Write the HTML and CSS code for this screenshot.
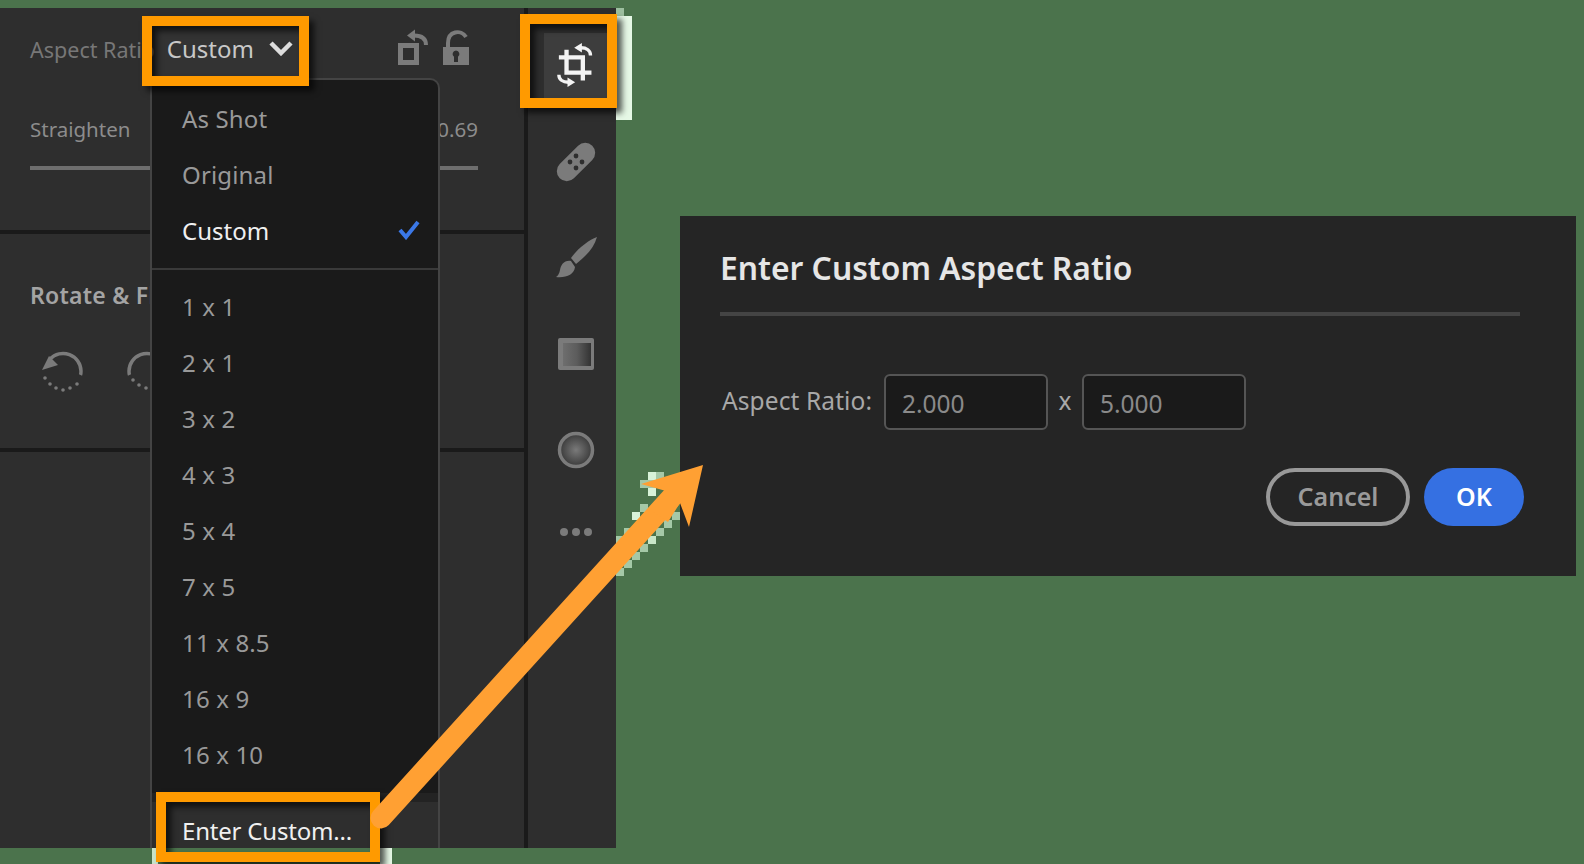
FILE: index.html
```html
<!DOCTYPE html>
<html lang="en">
<head>
<meta charset="utf-8">
<title>Enter Custom Aspect Ratio</title>
<link rel="stylesheet" href="styles.css">
</head>
<body>
<svg class="halos" viewBox="0 0 1584 864" aria-hidden="true">
  <rect x="616" y="8" width="8" height="8" fill="#9dbf9f"/>
  <rect x="616" y="16" width="16" height="104" fill="#e6f8e6"/>
  <rect x="152" y="848" width="6" height="16" fill="#c9e4c9"/>
  <rect x="380" y="848" width="12" height="16" fill="#e6f8e6"/>
  <g fill="#a5c8a7">
    <rect x="648" y="472" width="8" height="8" fill="#d8f2d8"/><rect x="656" y="472" width="8" height="8"/>
    <rect x="640" y="480" width="16" height="8"/><rect x="648" y="488" width="8" height="8" fill="#d8f2d8"/>
    <rect x="640" y="504" width="8" height="8"/><rect x="632" y="512" width="8" height="8" fill="#d8f2d8"/>
    <rect x="624" y="528" width="8" height="8"/><rect x="616" y="536" width="8" height="8"/>
    <rect x="672" y="512" width="8" height="8"/><rect x="664" y="520" width="8" height="8"/>
    <rect x="656" y="528" width="8" height="8"/><rect x="648" y="536" width="8" height="8" fill="#c8e6c8"/>
    <rect x="640" y="544" width="8" height="8"/><rect x="632" y="552" width="8" height="8"/>
    <rect x="624" y="560" width="8" height="8"/><rect x="616" y="568" width="8" height="8"/>
  </g>
</svg>

<section class="panel">
  <div class="panel-main">
    <div class="group group-crop">
      <div class="aspect-row">
        <span class="aspect-label">Aspect Ratio</span>
        <span class="aspect-value">Custom
          <svg class="chevron" viewBox="0 0 26 16"><path d="M3 3l10 10L23 3"/></svg>
        </span>
        <span class="aspect-tools">
          <svg class="tool-svg" viewBox="0 0 30 38"><rect x="2.500" y="16.500" width="16" height="17" fill="none" stroke="#7b7b7b" stroke-width="5"/><path d="M28 16c0-6-4-9.500-12-9.500" fill="none" stroke="#7b7b7b" stroke-width="4"/><path d="M17 .5v12L9 6.500z" fill="#7b7b7b"/></svg>
          <svg class="tool-svg" viewBox="0 0 30 38"><path d="M7 19v-5c0-12 13-14 18-6" fill="none" stroke="#7b7b7b" stroke-width="4"/><path fill-rule="evenodd" d="M2 18h26v18H2zM15 21.500a3.500 3.500 0 0 0-2 6.300V33h4v-5.200a3.500 3.500 0 0 0-2-6.300z" fill="#7b7b7b"/></svg>
        </span>
      </div>
      <div class="straighten-row">
        <span>Straighten</span>
        <span>0.69</span>
      </div>
      <div class="slider"></div>
    </div>
    <div class="group group-rotate">
      <h3 class="rotate-title">Rotate &amp; Flip</h3>
      <div class="rotate-icons">
        <svg class="rotate-icon" viewBox="0 0 44 44"><path d="M9 10a18 18 0 0 1 31 12c0 2 0 3-.5 4" fill="none" stroke="#7b7b7b" stroke-width="3.500"/><path d="M0 15l16-5-9-9z" fill="#7b7b7b" transform="translate(1 6)"/><g fill="#7b7b7b"><circle cx="4" cy="29" r="1.800"/><circle cx="9" cy="35" r="1.800"/><circle cx="15" cy="39" r="1.800"/><circle cx="22" cy="41" r="1.800"/><circle cx="29" cy="39" r="1.800"/><circle cx="36" cy="35" r="1.800"/></g></svg>
        <svg class="rotate-icon" viewBox="0 0 44 44"><path d="M35 10A18 18 0 0 0 4 22c0 2 0 3 .5 4" fill="none" stroke="#7b7b7b" stroke-width="3.500"/><g fill="#7b7b7b"><circle cx="8" cy="31" r="1.800"/><circle cx="14" cy="36" r="1.800"/><circle cx="21" cy="39" r="1.800"/><circle cx="28" cy="39" r="1.800"/></g></svg>
      </div>
    </div>
  </div>
  <div class="panel-divider"></div>
  <nav class="toolbar">
    <div class="tool tool-active">
      <svg class="tool-icon" viewBox="0 0 48 48"><path d="M3 15h25v24M11 7v24h26" fill="none" stroke="#f4f4f4" stroke-width="4.500"/><path d="M36 13c0-5-4-8-10-8" fill="none" stroke="#f4f4f4" stroke-width="3.500"/><path d="M27 0v10l-8-5z" fill="#f4f4f4"/><path d="M3 33c0 5 4 8 10 8" fill="none" stroke="#f4f4f4" stroke-width="3.500"/><path d="M12 36v10l8-5z" fill="#f4f4f4"/></svg>
    </div>
    <div class="tool">
      <svg class="tool-icon" viewBox="0 0 48 48"><rect x="1" y="14" width="46" height="20" rx="10" fill="#7b7b7b" transform="rotate(-45 24 24)"/><g fill="#2e2e2e"><circle cx="24" cy="18" r="2.400"/><circle cx="18" cy="24" r="2.400"/><circle cx="30" cy="24" r="2.400"/><circle cx="24" cy="30" r="2.400"/></g></svg>
    </div>
    <div class="tool">
      <svg class="tool-icon" viewBox="0 0 48 48"><path d="M45 3C37 6 26 14 19 24l5 6C34 22 42 14 45 3z" fill="#7b7b7b"/><path d="M19 27c-7-1-10 4-11 9-.5 3-2 6-4 7 10 1 18-2 19-10z" fill="#7b7b7b"/></svg>
    </div>
    <div class="tool">
      <svg class="tool-icon" viewBox="0 0 48 48"><defs><linearGradient id="gr"><stop offset="0" stop-color="#6e6e6e"/><stop offset=".5" stop-color="#5c5c5c"/><stop offset="1" stop-color="#333"/></linearGradient></defs><rect x="6" y="8" width="36" height="32" rx="2" fill="#7b7b7b"/><rect x="11" y="13" width="28" height="23" fill="url(#gr)"/></svg>
    </div>
    <div class="tool">
      <svg class="tool-icon" viewBox="0 0 48 48"><defs><radialGradient id="rd"><stop offset="0" stop-color="#7a7a7a"/><stop offset="1" stop-color="#3a3a3a"/></radialGradient></defs><circle cx="24" cy="24" r="16.500" fill="url(#rd)" stroke="#7b7b7b" stroke-width="3.500"/></svg>
    </div>
    <div class="tool tool-more">
      <svg class="tool-icon" viewBox="0 0 48 48"><g fill="#7b7b7b"><circle cx="12" cy="24" r="4"/><circle cx="24" cy="24" r="4"/><circle cx="36" cy="24" r="4"/></g></svg>
    </div>
  </nav>

  <div class="menu">
    <ul class="menu-list">
      <li class="menu-item">As Shot</li>
      <li class="menu-item">Original</li>
      <li class="menu-item menu-item-on">Custom
        <svg class="check" viewBox="0 0 22 20"><path d="M2 10l6 7L20 2" /></svg>
      </li>
    </ul>
    <div class="menu-sep"></div>
    <ul class="menu-list">
      <li class="menu-item">1 x 1</li>
      <li class="menu-item">2 x 1</li>
      <li class="menu-item">3 x 2</li>
      <li class="menu-item">4 x 3</li>
      <li class="menu-item">5 x 4</li>
      <li class="menu-item">7 x 5</li>
      <li class="menu-item">11 x 8.5</li>
      <li class="menu-item">16 x 9</li>
      <li class="menu-item">16 x 10</li>
    </ul>
    <div class="menu-footer">Enter Custom...</div>
  </div>
</section>

<section class="dialog">
  <h2 class="dialog-title">Enter Custom Aspect Ratio</h2>
  <div class="dialog-rule"></div>
  <div class="dialog-form">
    <span class="form-label">Aspect Ratio:</span>
    <div class="field">2.000</div>
    <span class="form-x">x</span>
    <div class="field">5.000</div>
  </div>
  <div class="dialog-actions">
    <button class="btn btn-cancel">Cancel</button>
    <button class="btn btn-ok">OK</button>
  </div>
</section>

<div class="callout callout-custom"></div>
<div class="callout callout-crop"></div>
<div class="callout callout-enter"></div>

<svg class="arrow" viewBox="0 0 1584 864" aria-hidden="true">
  <path d="M381 818L672 497" stroke="#ffa033" stroke-width="21" stroke-linecap="round" fill="none"/>
  <path d="M703 465L641 484 666 491 650 510 668 522 680 503 689 527z" fill="#ffa033"/>
</svg>
</body>
</html>
```
FILE: styles.css
```css
* { box-sizing: border-box; }
html, body { margin: 0; height: 864px; overflow: hidden; }
body {
  position: relative;
  background: #4b734c;
  font-family: "Noto Sans", "Liberation Sans", sans-serif;
  color: #9a9a9a;
}
.halos, .arrow {
  position: absolute;
  left: 0;
  top: 0;
  width: 1584px;
  height: 864px;
}
.arrow { z-index: 5; pointer-events: none; }

/* develop panel window */
.panel {
  position: absolute;
  left: 0;
  top: 8px;
  width: 616px;
  height: 840px;
  display: flex;
  background: #2e2e2e;
}
.panel-main { width: 524px; display: flex; flex-direction: column; }
.panel-divider { width: 4px; background: #1a1a1a; }
.group { border-bottom: 4px solid #1a1a1a; padding: 0 46px 0 30px; }
.group-crop { height: 226px; }
.group-rotate { height: 218px; }

.aspect-row { display: flex; align-items: center; height: 64px; margin-top: 8px; }
.aspect-label {
  flex: 0 0 122px;
  white-space: nowrap;
  padding-top: 2px;
  font-size: 21.500px;
  color: #777;
}
.aspect-value {
  position: relative;
  display: flex;
  align-items: center;
  flex: 0 0 152px;
  padding-left: 12px;
  height: 56px;
  font-size: 24px;
  color: #c8c8c8;
  background: #333;
}
.chevron { width: 26px; height: 16px; margin-left: 14px; fill: none; stroke: #ddd; stroke-width: 4.500; }
.aspect-tools { display: flex; gap: 13px; margin-left: 91px; }
.tool-svg { width: 30px; height: 38px; display: block; }

.straighten-row {
  display: flex;
  justify-content: space-between;
  margin-top: 34px;
  line-height: 30px;
  font-size: 20.500px;
  color: #8c8c8c;
}
.slider { height: 4px; margin-top: 22px; background: #6e6e6e; }

.rotate-title {
  margin: 45px 0 0;
  font-size: 23px;
  line-height: 32px;
  font-weight: 600;
  letter-spacing: .25px;
  color: #a4a4a4;
}
.rotate-icons { display: flex; gap: 40px; margin: 38px 0 0 11px; }
.rotate-icon { width: 44px; height: 44px; display: block; }

/* tool rail */
.toolbar { flex: 1; display: flex; flex-direction: column; padding: 10px 0 0 8px; }
.tool { height: 96px; display: flex; align-items: center; justify-content: center; }
.tool-active { background: linear-gradient(#3d3d3d, #3d3d3d) center / 64px 66px no-repeat; }
.tool-active .tool-icon { width: 46px; height: 46px; margin: 0 0 0 6px; }
.tool-more { height: 68px; }
.tool-icon { width: 48px; height: 48px; display: block; }

/* dropdown */
.menu {
  position: absolute;
  z-index: 2;
  left: 150px;
  top: 70px;
  width: 290px;
  height: 770px;
  display: flex;
  flex-direction: column;
  padding-top: 10px;
  background: #1a1a1a;
  border: 2px solid #444;
  border-bottom: 0;
  border-radius: 0 10px 0 0;
}
.menu-list { flex: none; list-style: none; margin: 0; padding: 0; }
.menu-item {
  display: flex;
  align-items: center;
  justify-content: space-between;
  height: 56px;
  padding: 0 18px 0 30px;
  font-size: 24px;
  letter-spacing: .15px;
  color: #999;
}
.menu-item-on { color: #f0f0f0; letter-spacing: 0; }
.check { width: 22px; height: 20px; fill: none; stroke: #3b78e7; stroke-width: 4; }
.menu-sep { flex: none; height: 2px; margin: 10px 0 8px; background: #3a3a3a; }
.menu-footer {
  flex: 1 1 0;
  min-height: 0;
  margin-top: 11px;
  padding: 12px 0 0 30px;
  font-size: 24px;
  letter-spacing: -.2px;
  line-height: 34px;
  color: #f0f0f0;
  background: #2e2e2e;
  border-top: 9px solid #232323;
}

/* dialog window */
.dialog {
  position: absolute;
  left: 680px;
  top: 216px;
  width: 896px;
  height: 360px;
  padding: 32px 52px 0 40px;
  background: #252525;
}
.dialog-title {
  margin: 0;
  font-size: 31.800px;
  line-height: 40px;
  font-weight: 600;
  color: #e6e6e6;
}
.dialog-rule { height: 4px; width: 800px; margin-top: 24px; background: #444; }
.dialog-form { display: flex; align-items: center; margin-top: 58px; font-size: 24.500px; }
.form-label { width: 164px; padding: 0 0 4px 2px; letter-spacing: .1px; color: #a8a8a8; }
.field {
  width: 164px;
  height: 56px;
  padding: 2px 0 0 16px;
  line-height: 52px;
  color: #8a8a8a;
  background: #1a1a1a;
  border: 2px solid #555;
  border-radius: 6px;
}
.form-x { width: 34px; padding-bottom: 3px; text-align: center; color: #a8a8a8; }
.dialog-actions { display: flex; justify-content: flex-end; gap: 14px; margin-top: 38px; }
.btn {
  height: 58px;
  padding: 0 0 2px;
  border-radius: 29px;
  font: 600 25px "Noto Sans", "Liberation Sans", sans-serif;
}
.btn-cancel { width: 144px; background: transparent; border: 4px solid #999; color: #9a9a9a; }
.btn-ok { width: 100px; background: #3570e2; border: 0; color: #fff; }

/* orange callouts */
.callout {
  position: absolute;
  z-index: 4;
  border: 10px solid #ff9a00;
  box-shadow: 5px 5px 6px rgba(0, 0, 0, .65), inset 5px 5px 6px rgba(0, 0, 0, .65);
}
.callout-custom { left: 142px; top: 16px; width: 167px; height: 70px; }
.callout-crop { left: 520px; top: 14px; width: 97px; height: 94px; }
.callout-enter { left: 156px; top: 792px; width: 224px; height: 70px; }
```
